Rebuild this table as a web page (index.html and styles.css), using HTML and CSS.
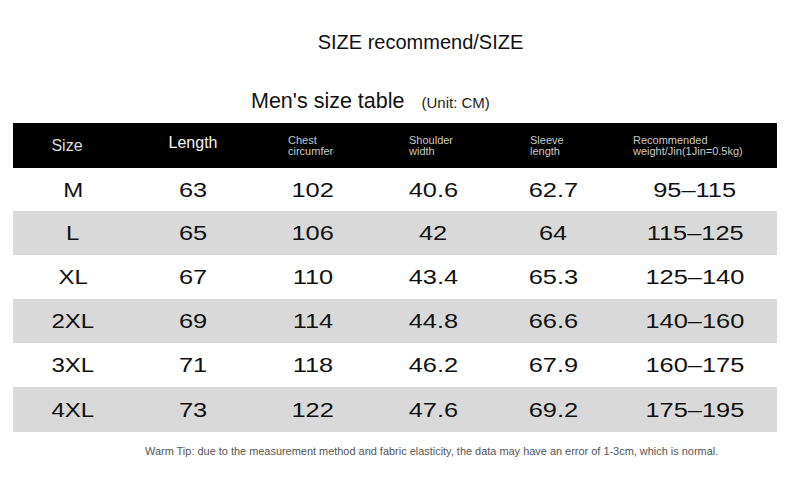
FILE: index.html
```html
<!DOCTYPE html>
<html lang="en">
<head>
<meta charset="utf-8">
<title>SIZE recommend</title>
<link rel="stylesheet" href="styles.css">
</head>
<body>
<div class="page">
  <h1 class="title">SIZE recommend/SIZE</h1>
  <div class="subtitle">
    <span class="sub-main">Men's size table</span>
    <span class="sub-unit">(Unit: CM)</span>
  </div>
  <div class="table">
    <div class="row head">
      <div class="cell hc-size">Size</div>
      <div class="cell hc-length">Length</div>
      <div class="cell hc-small hc-chest"><span class="clip">Chest<br>circumference</span></div>
      <div class="cell hc-small hc-shoulder"><span>Shoulder<br>width</span></div>
      <div class="cell hc-small hc-sleeve"><span>Sleeve<br>length</span></div>
      <div class="cell hc-small hc-weight"><span>Recommended<br>weight/Jin(1Jin=0.5kg)</span></div>
    </div>
    <div class="row r1">
      <div class="cell"><span class="v sz">M</span></div>
      <div class="cell"><span class="v">63</span></div>
      <div class="cell"><span class="v">102</span></div>
      <div class="cell"><span class="v">40.6</span></div>
      <div class="cell"><span class="v">62.7</span></div>
      <div class="cell"><span class="v">95–115</span></div>
    </div>
    <div class="row gray">
      <div class="cell"><span class="v sz">L</span></div>
      <div class="cell"><span class="v">65</span></div>
      <div class="cell"><span class="v">106</span></div>
      <div class="cell"><span class="v">42</span></div>
      <div class="cell"><span class="v">64</span></div>
      <div class="cell"><span class="v">115–125</span></div>
    </div>
    <div class="row">
      <div class="cell"><span class="v sz">XL</span></div>
      <div class="cell"><span class="v">67</span></div>
      <div class="cell"><span class="v">110</span></div>
      <div class="cell"><span class="v">43.4</span></div>
      <div class="cell"><span class="v">65.3</span></div>
      <div class="cell"><span class="v">125–140</span></div>
    </div>
    <div class="row gray">
      <div class="cell"><span class="v sz">2XL</span></div>
      <div class="cell"><span class="v">69</span></div>
      <div class="cell"><span class="v">114</span></div>
      <div class="cell"><span class="v">44.8</span></div>
      <div class="cell"><span class="v">66.6</span></div>
      <div class="cell"><span class="v">140–160</span></div>
    </div>
    <div class="row">
      <div class="cell"><span class="v sz">3XL</span></div>
      <div class="cell"><span class="v">71</span></div>
      <div class="cell"><span class="v">118</span></div>
      <div class="cell"><span class="v">46.2</span></div>
      <div class="cell"><span class="v">67.9</span></div>
      <div class="cell"><span class="v">160–175</span></div>
    </div>
    <div class="row gray last">
      <div class="cell"><span class="v sz">4XL</span></div>
      <div class="cell"><span class="v">73</span></div>
      <div class="cell"><span class="v">122</span></div>
      <div class="cell"><span class="v">47.6</span></div>
      <div class="cell"><span class="v">69.2</span></div>
      <div class="cell"><span class="v">175–195</span></div>
    </div>
  </div>
  <p class="tip">Warm Tip: due to the measurement method and fabric elasticity, the data may have an error of 1-3cm, which is normal.</p>
</div>
</body>
</html>
```
FILE: styles.css
```css
* { box-sizing: border-box; }
html, body {
  margin: 0;
  padding: 0;
  background: #ffffff;
}
body {
  font-family: "Liberation Sans", Arial, sans-serif;
  color: #111;
}
.page {
  width: 790px;
  height: 480px;
  padding-top: 30px;
}
.title {
  margin: 0;
  padding-left: 51px;
  text-align: center;
  font-size: 20px;
  font-weight: normal;
  line-height: 24px;
  height: 24px;
  color: #111;
}
.subtitle {
  margin-top: 35px;
  padding-left: 251px;
  height: 24px;
  display: flex;
  align-items: baseline;
  line-height: 24px;
}
.sub-main {
  font-size: 21.5px;
  color: #111;
}
.sub-unit {
  margin-left: 17px;
  font-size: 15px;
  color: #222;
}
.table {
  margin-top: 10px;
  margin-left: 13px;
  width: 764px;
}
.row {
  display: grid;
  grid-template-columns: 120px 120px 120px 120px 120px 164px;
  height: 44px;
  background: #ffffff;
}
.row.r1 { height: 43px; }
.row.last { height: 45px; }
.row.gray { background: #d9d9d9; }
.row.head {
  height: 45px;
  background: #000000;
}
.cell {
  display: flex;
  align-items: center;
  justify-content: center;
}
.v {
  display: inline-block;
  font-size: 20px;
  line-height: 24px;
  color: #111;
  transform: scaleX(1.27);
}
.v.sz {
  transform: scaleX(1.2);
}
.hc-size {
  font-size: 16px;
  color: #dedede;
  padding-right: 12px;
}
.hc-length {
  font-size: 16px;
  color: #f4f4f4;
  padding-bottom: 5px;
}
.hc-small {
  justify-content: flex-start;
  font-size: 11px;
  line-height: 11px;
  color: #c9c9c9;
}
.hc-chest { padding-left: 35px; }
.hc-shoulder { padding-left: 36px; }
.hc-sleeve { padding-left: 37px; }
.hc-weight { padding-left: 20px; }
.clip {
  display: block;
  width: 46px;
  overflow: hidden;
  white-space: nowrap;
}
.tip {
  margin: 12px 0 0 145px;
  font-size: 10.95px;
  line-height: 14px;
  color: #555;
}
```
